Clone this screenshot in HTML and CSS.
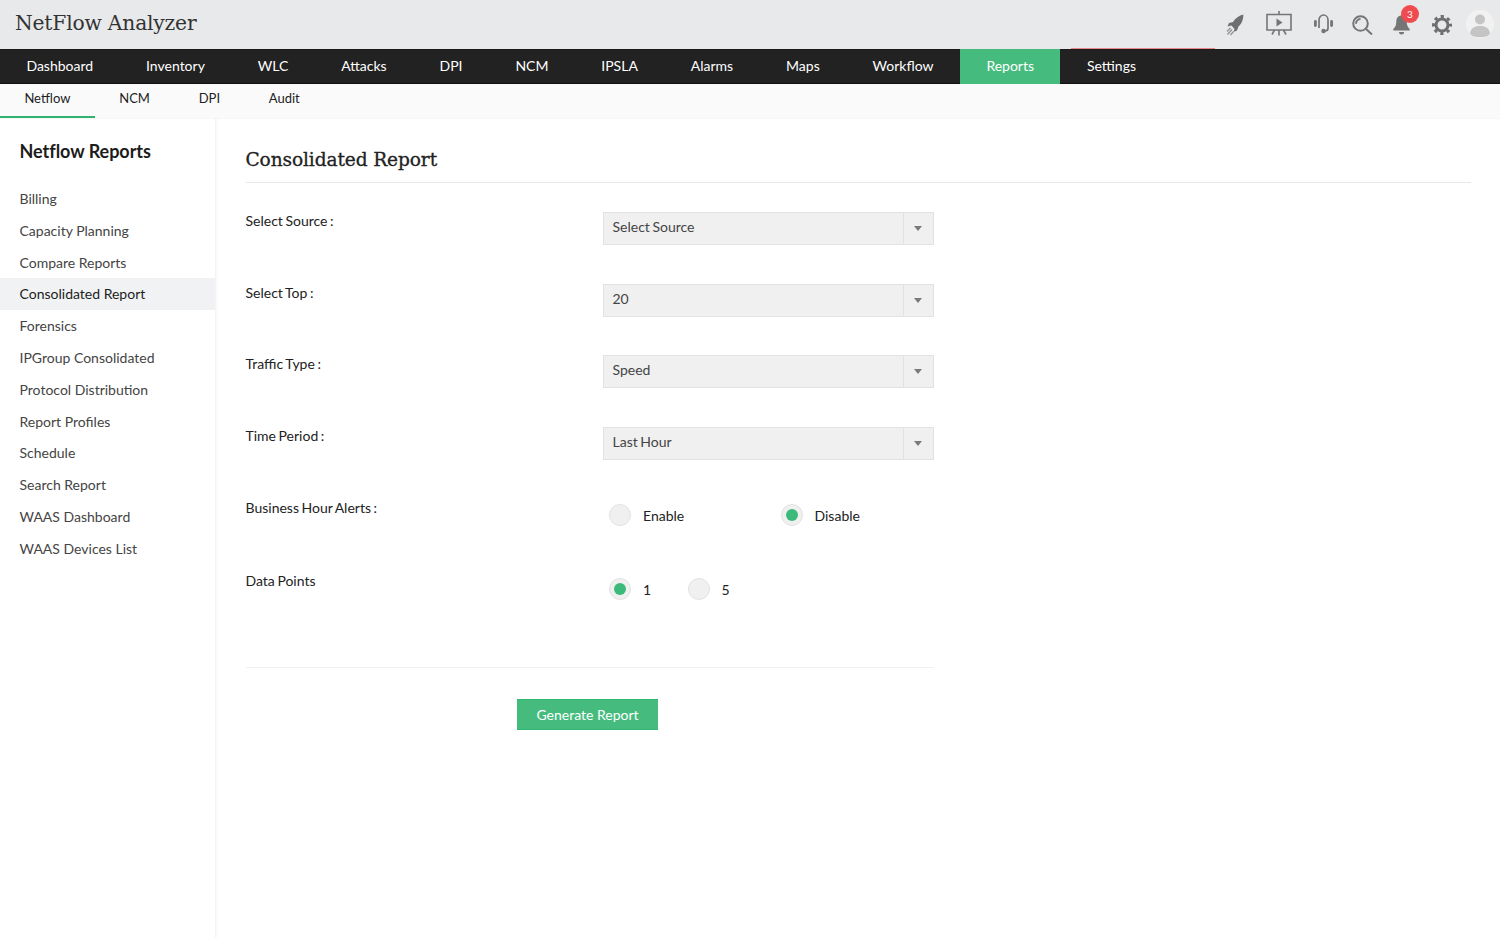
FILE: index.html
```html
<!DOCTYPE html>
<html lang="en">
<head>
<meta charset="utf-8">
<title>NetFlow Analyzer</title>
<link rel="stylesheet" href="styles.css">
</head>
<body>
<header class="topbar">
  <div class="brand">NetFlow Analyzer</div>
  <div class="tools">
    <svg class="tool t-rocket" viewBox="0 0 18 22"><path d="M17.300.5C13 1.500 9.500 4 7 8L3 9l-1.500 3.500 4-1 3 3.500-1 3 3.500-1.500 1.500-4C15.500 10 17.500 5.500 17.300.5z" fill="#6f6f6f"/><path d="M4.500 14L1 17.500M6 15.500L1.500 20.500M7.500 17.500L4.500 21" stroke="#8f8f8f" stroke-width="1.200" fill="none"/></svg>
    <svg class="tool t-screen" viewBox="0 0 26 25"><path d="M13 0v3.500M1 3.500h24v15.500H1zM13 19v5.500M8.500 19l-2.500 4.500M17.500 19l2.500 4.500" stroke="#757575" stroke-width="1.600" fill="none"/><path d="M10.500 7.500l6 4-6 4z" fill="#757575"/></svg>
    <svg class="tool t-head" viewBox="0 0 19 20"><path d="M5 14V6a4.500 5 0 0 1 9 0v8a3 3 0 0 1-3 3H9.500" stroke="#757575" stroke-width="1.700" fill="none"/><rect x="0" y="6" width="2.800" height="7" rx="1.400" fill="#757575"/><rect x="16.200" y="6" width="2.800" height="7" rx="1.400" fill="#757575"/><circle cx="9.500" cy="17" r="2.200" fill="#757575"/></svg>
    <svg class="tool t-search" viewBox="0 0 21 20"><circle cx="8.500" cy="8.500" r="7.300" stroke="#757575" stroke-width="2" fill="none"/><path d="M8.500 4a4.800 4.800 0 0 0-4.500 4.800M13.800 13.800l6.200 5.700" stroke="#757575" stroke-width="2" fill="none"/></svg>
    <span class="bell">
      <svg class="t-bell" viewBox="0 0 17 20"><path d="M8.500.5c3.300 0 5.200 2.600 5.200 6 0 3.700 1 5.500 3 7.500v1.500H.3V14c2-2 3-3.800 3-7.500 0-3.400 1.900-6 5.200-6z" fill="#757575"/><path d="M6 17h5a2.500 2.500 0 0 1-5 0z" fill="#757575"/></svg>
      <span class="badge">3</span>
    </span>
    <svg class="tool t-gear" viewBox="0 0 20 20"><circle cx="10" cy="10" r="6" fill="none" stroke="#6f6f6f" stroke-width="3"/><circle cx="10" cy="10" r="8.500" fill="none" stroke="#6f6f6f" stroke-width="3" stroke-dasharray="3.200 3.476" stroke-dashoffset="1.600"/></svg>
    <span class="avatar"><svg viewBox="0 0 28 28"><circle cx="14" cy="9.500" r="5" fill="#c4c4c4"/><path d="M4 25c0-6.500 4-9 10-9s10 2.500 10 9c-2 1.500-6 2-10 2s-8-.5-10-2z" fill="#c4c4c4"/></svg></span>
  </div>
</header>

<nav class="mainnav">
  <a class="nav-item">Dashboard</a>
  <a class="nav-item">Inventory</a>
  <a class="nav-item">WLC</a>
  <a class="nav-item">Attacks</a>
  <a class="nav-item">DPI</a>
  <a class="nav-item">NCM</a>
  <a class="nav-item">IPSLA</a>
  <a class="nav-item">Alarms</a>
  <a class="nav-item">Maps</a>
  <a class="nav-item">Workflow</a>
  <a class="nav-item active">Reports</a>
  <a class="nav-item settings">Settings</a>
</nav>

<nav class="subnav">
  <a class="sub-item active">Netflow</a>
  <a class="sub-item">NCM</a>
  <a class="sub-item">DPI</a>
  <a class="sub-item">Audit</a>
</nav>

<div class="layout">
  <aside class="sidebar">
    <h2 class="side-title">Netflow Reports</h2>
    <ul class="side-list">
      <li>Billing</li>
      <li>Capacity Planning</li>
      <li>Compare Reports</li>
      <li class="current">Consolidated Report</li>
      <li>Forensics</li>
      <li>IPGroup Consolidated</li>
      <li>Protocol Distribution</li>
      <li>Report Profiles</li>
      <li>Schedule</li>
      <li>Search Report</li>
      <li>WAAS Dashboard</li>
      <li>WAAS Devices List</li>
    </ul>
  </aside>
  <main class="content">
    <h1 class="page-title">Consolidated Report</h1>
    <div class="form">
      <div class="row"><label class="lbl">Select Source :</label><div class="select"><span class="val">Select Source</span><span class="arrow"></span></div></div>
      <div class="row"><label class="lbl">Select Top :</label><div class="select"><span class="val">20</span><span class="arrow"></span></div></div>
      <div class="row"><label class="lbl">Traffic Type :</label><div class="select"><span class="val">Speed</span><span class="arrow"></span></div></div>
      <div class="row"><label class="lbl">Time Period :</label><div class="select"><span class="val">Last Hour</span><span class="arrow"></span></div></div>
      <div class="row radio-row"><label class="lbl">Business Hour Alerts :</label>
        <div class="radios wide">
          <span class="opt"><span class="radio"></span>Enable</span>
          <span class="opt"><span class="radio on"></span>Disable</span>
        </div>
      </div>
      <div class="row radio-row last"><label class="lbl">Data Points</label>
        <div class="radios narrow">
          <span class="opt"><span class="radio on"></span>1</span>
          <span class="opt"><span class="radio"></span>5</span>
        </div>
      </div>
      <div class="actions"><button class="btn" type="button">Generate Report</button></div>
    </div>
  </main>
</div>
</body>
</html>
```
FILE: styles.css
```css
* { box-sizing: border-box; }
html, body { margin: 0; height: 100%; }
body { font-family: Lato, "Open Sans", sans-serif; font-size: 14px; color: #222; background: #fff; height: 938px; overflow: hidden; }

.topbar { height: 49px; background: #e8e9ea; display: flex; justify-content: space-between; padding: 0 6px 0 15px; }
.brand { font-family: "DejaVu Serif", serif; font-size: 20.300px; line-height: 46px; font-weight: 400; color: #333; letter-spacing: -0.2px; }
.tools { display: flex; align-items: flex-start; }
.tool { display: block; flex: none; }
.t-rocket { width: 18px; height: 22px; margin: 14px 22px 0 0; }
.t-screen { width: 26px; height: 25px; margin: 11px 22px 0 0; }
.t-head { width: 19px; height: 20px; margin: 14px 19px 0 0; }
.t-search { width: 21px; height: 20px; margin: 15px 20px 0 0; }
.bell { position: relative; display: block; width: 17px; height: 20px; margin: 15px 22px 0 0; }
.t-bell { display: block; width: 17px; height: 20px; }
.badge { position: absolute; left: 8px; top: -10px; width: 18px; height: 18px; border-radius: 50%; background: #f04b4f; color: #fff; font-size: 10px; line-height: 18px; text-align: center; }
.t-gear { width: 20px; height: 20px; margin: 15px 14px 0 0; }
.avatar { display: block; width: 28px; height: 28px; border-radius: 50%; background: #f1f1f1; overflow: hidden; margin-top: 10px; }
.avatar svg { display: block; width: 28px; height: 28px; }

.mainnav { position: relative; height: 35px; background: #222; border-top: 1px solid #1a1a1a; border-bottom: 1px solid #111; display: flex; }
.mainnav::before { content: ""; position: absolute; left: 1071px; top: -2px; width: 144px; height: 1px; background: #e8868a; }
.nav-item { display: block; padding: 0 26.450px; color: #fff; font-size: 14px; line-height: 31px; }
.nav-item.active { background: #45bc7e; margin-top: -1px; margin-bottom: -1px; line-height: 33px; }

.subnav { height: 34px; background: #fafafa; display: flex; box-shadow: 0 1px 1px rgba(0,0,0,.03); position: relative; }
.sub-item { display: block; padding: 0 24.400px; font-size: 13px; line-height: 29px; color: #222; }
.sub-item.active { border-bottom: 2px solid #2fb36f; height: 34px; }

.layout { display: flex; height: 820px; }
.sidebar { width: 215px; flex: none; box-shadow: 1px 0 3px rgba(0,0,0,.07); padding-top: 22px; }
.side-title { margin: 0 0 21px 19.500px; font-size: 18px; line-height: 22px; font-weight: 700; color: #1c1c1c; letter-spacing: -0.03px; }
.side-list { list-style: none; margin: 0; padding: 0; }
.side-list li { height: 31.800px; padding-left: 19.500px; font-size: 14px; line-height: 31.800px; color: #444; }
.side-list li.current { background: #f1f2f3; color: #1c1c1c; }

.content { flex: 1; padding: 0 29px 0 30.500px; }
.page-title { margin: 0; height: 65px; padding-top: 29px; font-family: "DejaVu Serif", serif; font-size: 18.600px; line-height: 26px; font-weight: 400; -webkit-text-stroke: .3px #222; color: #222; border-bottom: 1px solid #e8e8e8; letter-spacing: -0.12px; }
.form { width: 688px; padding-top: 29px; }
.row { display: flex; height: 71.700px; }
.lbl { width: 357px; flex: none; font-size: 14px; line-height: 18px; color: #222; word-spacing: -1px; }
.select { width: 331px; height: 33px; background: #f0f0f0; border: 1px solid #e2e2e2; display: flex; }
.val { flex: 1; padding-left: 9px; font-size: 14px; line-height: 27px; color: #444; word-spacing: -1px; }
.arrow { width: 30px; border-left: 1px solid #e2e2e2; position: relative; }
.arrow::after { content: ""; position: absolute; left: 10.500px; top: 13px; border: 4px solid transparent; border-top: 5px solid #7a7a7a; border-bottom: 0; }
.radio-row { height: 73.500px; }
.radio-row.last { height: 96px; border-bottom: 1px solid #f0f0f0; }
.radios { display: flex; padding-left: 6.500px; padding-top: 6px; }
.radios.narrow { padding-top: 7px; }
.opt { display: flex; align-items: flex-start; font-size: 14px; line-height: 22px; color: #222; }
.wide .opt { width: 171.500px; }
.narrow .opt { width: 78.500px; }
.radio { width: 22px; height: 22px; margin-right: 12px; border-radius: 50%; background: #f0f0f0; border: 1px solid #e2e2e2; margin-top: -1px; position: relative; flex: none; }
.radio.on::after { content: ""; position: absolute; left: 4px; top: 4px; width: 12px; height: 12px; border-radius: 50%; background: #3cba7a; }
.actions { padding: 31px 0 0 271.500px; }
.btn { display: block; width: 141px; height: 31px; border: 0; border-top: 1px solid #2fb872; border-bottom: 1px solid #2fb872; background: #45bc7e; color: #fff; font-family: Lato, sans-serif; font-size: 14px; padding: 0; }
```
